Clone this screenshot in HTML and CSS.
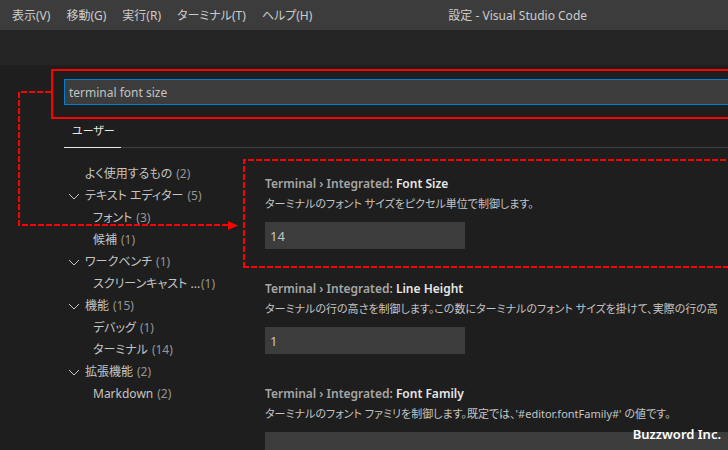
FILE: index.html
```html
<!DOCTYPE html>
<html lang="ja">
<head>
<meta charset="utf-8">
<title>設定 - Visual Studio Code</title>
<link rel="stylesheet" href="styles.css">
</head>
<body>
<header class="titlebar">
  <nav class="menu">
    <button type="button">表示(V)</button>
    <button type="button">移動(G)</button>
    <button type="button">実行(R)</button>
    <button type="button">ターミナル(T)</button>
    <button type="button">ヘルプ(H)</button>
  </nav>
  <h1 class="window-title">設定 - Visual Studio Code</h1>
</header>
<div class="tabstrip"></div>
<main class="editor">
  <input class="search" type="text" value="terminal font size" aria-label="設定の検索">
  <div class="scopes"><button class="scope" type="button">ユーザー</button></div>
  <div class="columns">
    <ul class="tree">
      <li class="row"><span class="label">よく使用するもの</span><span class="count">(2)</span></li>
      <li class="row"><svg class="chevron" viewBox="0 0 12 12"><path d="M1 4l5 5 5-5"/></svg><span class="label">テキスト エディター</span><span class="count">(5)</span></li>
      <li class="row child"><span class="label">フォント</span><span class="count">(3)</span></li>
      <li class="row child"><span class="label">候補</span><span class="count">(1)</span></li>
      <li class="row"><svg class="chevron" viewBox="0 0 12 12"><path d="M1 4l5 5 5-5"/></svg><span class="label">ワークベンチ</span><span class="count">(1)</span></li>
      <li class="row child"><span class="label cut">スクリーンキャスト ...</span><span class="count">(1)</span></li>
      <li class="row"><svg class="chevron" viewBox="0 0 12 12"><path d="M1 4l5 5 5-5"/></svg><span class="label">機能</span><span class="count">(15)</span></li>
      <li class="row child"><span class="label">デバッグ</span><span class="count">(1)</span></li>
      <li class="row child"><span class="label">ターミナル</span><span class="count">(14)</span></li>
      <li class="row"><svg class="chevron" viewBox="0 0 12 12"><path d="M1 4l5 5 5-5"/></svg><span class="label">拡張機能</span><span class="count">(2)</span></li>
      <li class="row child"><span class="label">Markdown</span><span class="count">(2)</span></li>
    </ul>
    <div class="settings">
      <section class="setting">
        <label class="name" for="font-size">Terminal › Integrated: <b>Font Size</b></label>
        <p class="description">ターミナルのフォント サイズをピクセル単位で制御します。</p>
        <input class="value" id="font-size" type="text" value="14">
      </section>
      <section class="setting">
        <label class="name" for="line-height">Terminal › Integrated: <b>Line Height</b></label>
        <p class="description">ターミナルの行の高さを制御します。この数にターミナルのフォント サイズを掛けて、実際の行の高</p>
        <input class="value" id="line-height" type="text" value="1">
      </section>
      <section class="setting">
        <label class="name" for="font-family">Terminal › Integrated: <b>Font Family</b></label>
        <p class="description">ターミナルのフォント ファミリを制御します。既定では、'#editor.fontFamily#' の値です。</p>
        <input class="value wide" id="font-family" type="text">
      </section>
    </div>
  </div>
</main>
<svg class="callouts" aria-hidden="true">
  <rect x="52" y="70" width="4000" height="48"/>
  <path class="dashed" d="M51 92H19V225H228"/>
  <path class="dashed" d="M244 268V160H4000"/>
  <path class="dashed" d="M243 267H4000"/>
  <path class="arrow" d="M228 221l10 4.500-10 4.500z"/>
</svg>
<div class="credit">Buzzword Inc.</div>
</body>
</html>
```
FILE: styles.css
```css
* { box-sizing: border-box; }

body {
  position: relative;
  height: 100vh;
  margin: 0;
  overflow: hidden;
  background: #1e1e1e;
  color: #c4c4c4;
  font: 12px/20px "Noto Sans", "Noto Sans CJK JP", sans-serif;
  font-feature-settings: "palt";
}

button, input {
  margin: 0;
  border: 0;
  border-radius: 0;
  color: inherit;
  font: inherit;
  font-feature-settings: inherit;
}

button { padding: 0; background: none; }

.titlebar {
  display: grid;
  grid-template-columns: 1fr auto 1fr;
  align-items: center;
  height: 30px;
  padding: 2px 0 0 12px;
  background: #3c3c3c;
  color: #cccccc;
  white-space: nowrap;
}

.menu { display: flex; gap: 16px; }

.window-title {
  margin: 0 12px 0 136px;
  font-size: 12px;
  font-weight: 400;
}

.tabstrip { height: 35px; background: #252526; }

.editor { padding: 14px 0 0 64px; }

.search {
  display: block;
  width: 100%;
  height: 26px;
  padding: 0 4px;
  border: 1px solid #007fd4;
  border-right: 0;
  background: #3c3c3c;
}

.scopes {
  display: flex;
  margin-top: 10px;
  border-bottom: 1px solid #404040;
}

.scope {
  height: 33px;
  margin-bottom: -1px;
  padding: 0 6px 0 8px;
  border-bottom: 1px solid #e7e7e7;
  color: #e7e7e7;
  font-size: 11px;
}

.columns {
  display: grid;
  grid-template-columns: 201px minmax(0, 1fr);
}

.tree {
  margin: 0;
  padding: 15px 0 0 4px;
  list-style: none;
}

.row {
  display: flex;
  align-items: center;
  height: 22px;
  padding-left: 17px;
  white-space: nowrap;
}

.child { padding-left: 25px; }
.count { margin-left: 4px; color: #969696; }
.cut { width: 104px; }

.chevron {
  width: 12px;
  height: 12px;
  margin: 0 5px 0 -17px;
  fill: none;
  stroke: #c5c5c5;
}

.settings { padding-top: 26px; }

.setting { height: 105px; white-space: nowrap; }

.name {
  display: block;
  color: #a6a6a6;
  font-weight: 600;
}

.name b { color: #e7e7e7; font-weight: 600; }

.description { margin: 0 0 8px; font-size: 11px; }

.value {
  display: block;
  width: 200px;
  height: 27px;
  padding: 0 5px;
  background: #3c3c3c;
  font-size: 13px;
}

.wide { width: 100%; }

.callouts {
  position: absolute;
  inset: 0;
  width: 100%;
  height: 100%;
  fill: none;
  stroke: #ff0000;
  stroke-width: 2;
  pointer-events: none;
}

.dashed { stroke-dasharray: 6 2; }
.arrow { fill: #ff0000; stroke: none; }

.credit {
  position: absolute;
  right: 7px;
  bottom: 6px;
  color: #ffffff;
  font-size: 13px;
  font-weight: 600;
}
```
